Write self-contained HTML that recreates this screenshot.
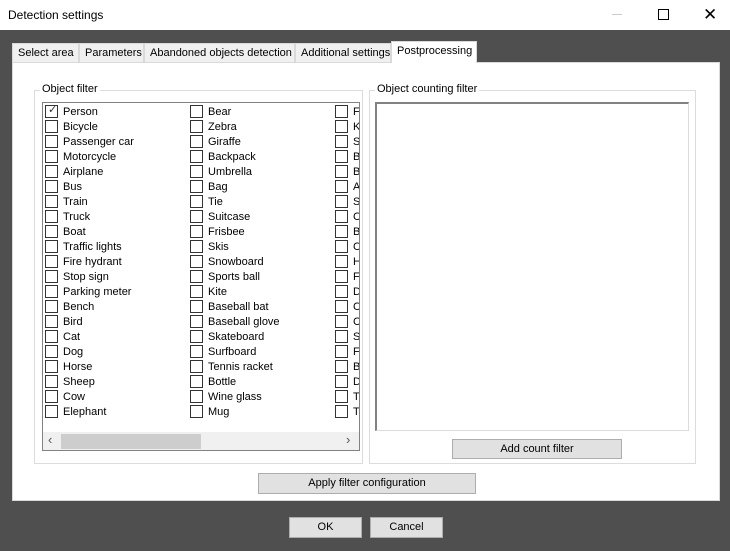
<!DOCTYPE html><html><head><style>
*{box-sizing:border-box;margin:0;padding:0}
body{width:730px;height:551px;background:#4f4f4f;font-family:"Liberation Sans",sans-serif;font-size:11px;color:#000;position:relative;overflow:hidden}
.a{position:absolute}
.title{left:0;top:0;width:730px;height:30px;background:#fff}
.tab{top:43px;height:19px;background:#f0f0f0;border:1px solid #d9d9d9;border-bottom:none;padding:3px 0 0 5px;white-space:nowrap;overflow:hidden}
.panel{left:12px;top:62px;width:708px;height:439px;background:#fff;border:1px solid #d9d9d9}
.gb{border:1px solid #dcdcdc}
.gl{background:#fff;padding:0 2px;white-space:nowrap}
.lb{border:1px solid #828282;background:#fff;overflow:hidden}
.cb{width:13px;height:13px;border:1px solid #333;background:#fff}
.txt{white-space:nowrap}
.btn{background:#e1e1e1;border:1px solid #adadad;text-align:center;line-height:18px}
</style></head><body>
<div class="a title"></div>
<div class="a txt" style="left:8px;top:8px;font-size:12px">Detection settings</div>
<div class="a" style="left:612px;top:14px;width:10px;height:1px;background:#ccc"></div>
<div class="a" style="left:658px;top:9px;width:11px;height:11px;border:1px solid #000"></div>
<div class="a" style="left:703px;top:6px;font-size:17px;line-height:17px">✕</div>
<div class="a tab" style="left:12px;width:67px">Select area</div>
<div class="a tab" style="left:79px;width:65px">Parameters</div>
<div class="a tab" style="left:144px;width:151px">Abandoned objects detection</div>
<div class="a tab" style="left:295px;width:96px">Additional settings</div>
<div class="a tab" style="left:391px;top:41px;height:22px;width:86px;background:#fff;padding-top:3px;z-index:2">Postprocessing</div>
<div class="a panel"></div>
<div class="a gb" style="left:34px;top:90px;width:329px;height:374px"></div>
<div class="a gl" style="left:40px;top:83px">Object filter</div>
<div class="a lb" style="left:42px;top:102px;width:318px;height:349px">
<div class="a" id="list" style="left:0;top:0;width:316px;height:330px"></div>
<div class="a" style="left:0;top:329px;width:316px;height:18px;background:#f0f0f0"></div>
<div class="a" style="left:18px;top:331px;width:140px;height:15px;background:#cdcdcd"></div>
<div class="a" style="left:5px;top:329px;font-size:13px;color:#555">‹</div>
<div class="a" style="left:303px;top:329px;font-size:13px;color:#555">›</div>
</div>
<div class="a gb" style="left:369px;top:90px;width:327px;height:374px"></div>
<div class="a gl" style="left:375px;top:83px">Object counting filter</div>
<div class="a" style="left:375px;top:102px;width:314px;height:329px;border:1px solid #dcdcdc;border-top:2px solid #828282;border-left:2px solid #828282;background:#fff"></div>
<div class="a btn" style="left:452px;top:439px;width:170px;height:20px">Add count filter</div>
<div class="a btn" style="left:258px;top:473px;width:218px;height:21px">Apply filter configuration</div>
<div class="a btn" style="left:289px;top:517px;width:73px;height:21px">OK</div>
<div class="a btn" style="left:370px;top:517px;width:73px;height:21px">Cancel</div>
<script>
var c1=["Person","Bicycle","Passenger car","Motorcycle","Airplane","Bus","Train","Truck","Boat","Traffic lights","Fire hydrant","Stop sign","Parking meter","Bench","Bird","Cat","Dog","Horse","Sheep","Cow","Elephant"];
var c2=["Bear","Zebra","Giraffe","Backpack","Umbrella","Bag","Tie","Suitcase","Frisbee","Skis","Snowboard","Sports ball","Kite","Baseball bat","Baseball glove","Skateboard","Surfboard","Tennis racket","Bottle","Wine glass","Mug"];
var c3="FKSBBASCBCHFDCCSFBDTT".split("");
var h="";
[[c1,2],[c2,147],[c3,292]].forEach(function(c){c[0].forEach(function(t,i){var y=2+i*15;
h+='<div class="a cb" style="left:'+c[1]+'px;top:'+y+'px"></div><div class="a txt" style="left:'+(c[1]+18)+'px;top:'+(y+1)+'px">'+t+'</div>';
if(c[1]==2&&i==0)h+='<div class="a" style="left:5px;top:'+(y-2)+'px;font-size:11px;color:#333">✓</div>';});});
document.getElementById("list").innerHTML=h;
</script>
</body></html>
